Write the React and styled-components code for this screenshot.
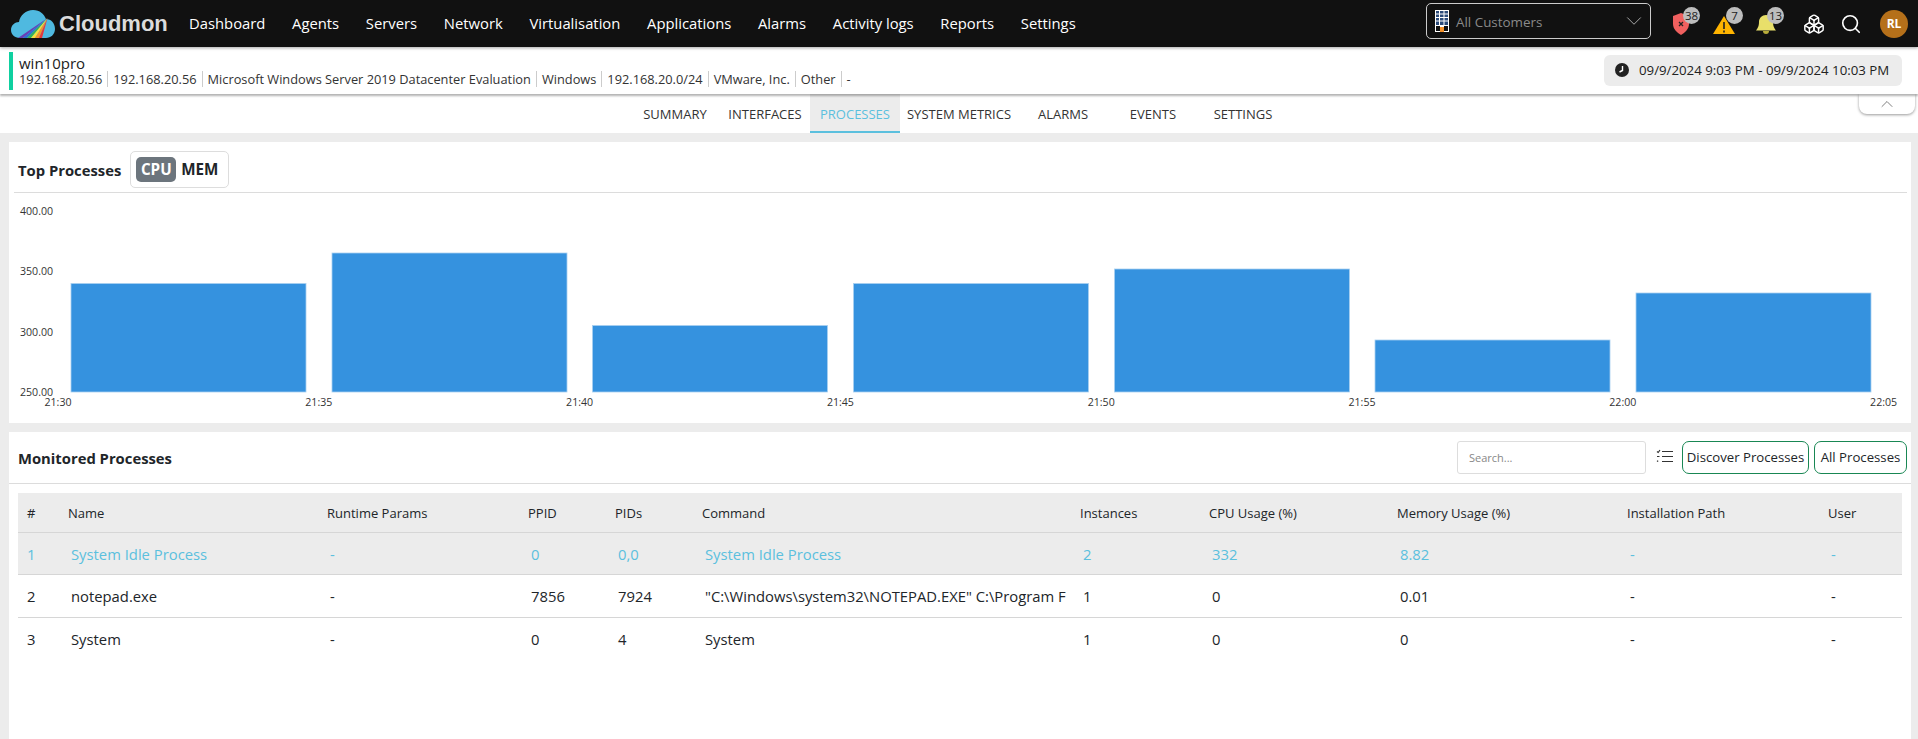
import React from 'react';
import styled, { createGlobalStyle } from 'styled-components';
import { Boxes, Search, ChevronDown, ChevronUp } from 'lucide-react';

const Global = createGlobalStyle`
  html, body { margin: 0; padding: 0; background: #ececec; }
  body { font-family: "Open Sans", "Noto Sans", sans-serif; color: #212529; overflow: hidden; }
  * { box-sizing: border-box; }
`;

const Page = styled.div`
  width: 1918px;
  height: 739px;
  display: flex;
  flex-direction: column;
  overflow: hidden;
`;

const TopBar = styled.header`
  height: 47px;
  flex: none;
  background: #111;
  display: flex;
  align-items: center;
  padding: 0 10px 0 11px;
  position: relative;
  z-index: 3;
  box-shadow: 0 1px 3px rgba(0,0,0,.35);
`;
const Logo = styled.div`
  display: flex;
  align-items: center;
  width: 178px;
  flex: none;
`;
const LogoText = styled.span`
  font-family: "Liberation Sans", Arial, sans-serif;
  font-weight: 700;
  font-size: 22px;
  color: #dcdcdc;
  margin-left: 4px;
`;
const Nav = styled.nav`
  display: flex;
  gap: 26.7px;
`;
const NavLink = styled.a`
  color: #fff;
  font-size: 14.8px;
  white-space: nowrap;
  margin-top: -2px;
`;
const RightSide = styled.div`
  margin-left: auto;
  display: flex;
  align-items: center;
`;
const CustomerSelect = styled.div`
  width: 225px;
  height: 36px;
  margin-top: -5px;
  border: 1px solid #ccc;
  border-radius: 5px;
  display: flex;
  align-items: center;
  padding: 0 3px 0 8px;
  color: #8a8a8a;
  font-size: 13.4px;
  gap: 7px;
`;
const SelectLabel = styled.span`
  flex: 1;
  padding-top: 2px;
`;
const Alerts = styled.div`
  display: flex;
  gap: 20px;
  margin-left: 20px;
`;
const AlertIcon = styled.div`
  position: relative;
  width: 22px;
  height: 22px;
`;
const Badge = styled.span`
  position: absolute;
  left: ${p => p.$left}px;
  top: -6px;
  min-width: 17px;
  height: 17px;
  border-radius: 9px;
  background: #bdbdbd;
  color: #222;
  font-size: 11.5px;
  line-height: 17px;
  text-align: center;
`;
const Tools = styled.div`
  display: flex;
  align-items: center;
  gap: 15px;
  margin-left: 26px;
  color: #fff;
`;
const Avatar = styled.div`
  width: 28px;
  height: 28px;
  margin-left: 18px;
  border-radius: 50%;
  background: #b5701a;
  color: #fff;
  font-size: 12px;
  font-weight: 700;
  display: flex;
  align-items: center;
  justify-content: center;
`;

const SubHeader = styled.section`
  height: 47px;
  flex: none;
  background: #fff;
  display: flex;
  align-items: center;
  padding: 0 16px 0 9px;
  position: relative;
  z-index: 2;
  box-shadow: 0 2px 2px rgba(0,0,0,.3);
`;
const StatusBar = styled.div`
  width: 4px;
  height: 38px;
  background: #0fd0a0;
  margin-right: 6px;
`;
const HostInfo = styled.div`
  flex: 1;
  padding-top: 2px;
`;
const HostName = styled.div`
  font-size: 15px;
  line-height: 15px;
  color: #222;
`;
const Facts = styled.div`
  display: flex;
  font-size: 12.8px;
  line-height: 16px;
  color: #333;
`;
const Fact = styled.span`
  padding: 0 5px;
  border-left: 1px solid #ccc;
  &:first-child { border-left: 0; padding-left: 0; }
`;
const DatePill = styled.div`
  width: 298px;
  height: 31px;
  background: #ececec;
  border-radius: 6px;
  display: flex;
  align-items: center;
  padding-left: 11px;
  gap: 10px;
  font-size: 13.25px;
  color: #222;
  margin-top: -1px;
`;

const TabBar = styled.div`
  height: 39px;
  flex: none;
  background: #fff;
  display: flex;
  justify-content: center;
  position: relative;
  z-index: 1;
`;
const Tab = styled.a`
  width: ${p => p.$w || 90}px;
  display: flex;
  align-items: center;
  justify-content: center;
  font-size: 13px;
  padding-top: 2px;
  color: ${p => (p.$active ? '#5bc0de' : '#333')};
  background: ${p => (p.$active ? '#ececec' : 'transparent')};
  border-bottom: 2px solid ${p => (p.$active ? '#5bc0de' : 'transparent')};
  white-space: nowrap;
`;
const Collapse = styled.div`
  position: absolute;
  right: 3px;
  top: 0;
  width: 56px;
  height: 20px;
  background: #fff;
  border-radius: 0 0 8px 8px;
  box-shadow: 0 1px 3px rgba(0,0,0,.4);
  display: flex;
  align-items: center;
  justify-content: center;
  color: #666;
`;

const Main = styled.main`
  flex: 1;
  display: flex;
  flex-direction: column;
  gap: 9px;
  padding: 9px 7px 0 9px;
  min-height: 0;
`;
const ChartCard = styled.section`
  height: 281px;
  flex: none;
  background: #fff;
`;
const ChartHead = styled.div`
  height: 51px;
  margin: 0 4px 0 5px;
  border-bottom: 1px solid #dcdcdc;
  display: flex;
  align-items: center;
  padding: 6px 0 0 4px;
`;
const CardTitle = styled.h2`
  margin: 0;
  font-size: 14.8px;
  font-weight: 700;
  color: #212529;
`;
const Toggle = styled.div`
  margin-left: 9px;
  margin-top: -2px;
  width: 99px;
  height: 37px;
  border: 1px solid #ddd;
  border-radius: 5px;
  display: flex;
  align-items: center;
  padding-left: 5px;
  gap: 5px;
  font-size: 15.2px;
  font-weight: 700;
`;
const ToggleOn = styled.span`
  width: 40px;
  height: 25px;
  background: #6c757d;
  color: #fff;
  border-radius: 5px;
  display: flex;
  align-items: center;
  justify-content: center;
`;
const ChartSvg = styled.svg`
  display: block;
  width: 1902px;
  height: 230px;
  font-family: "Open Sans", sans-serif;
  font-size: 10.6px;
  fill: #333;
`;

const TableCard = styled.section`
  flex: 1;
  background: #fff;
`;
const TableHead = styled.div`
  height: 52px;
  border-bottom: 1px solid #dcdcdc;
  display: flex;
  align-items: center;
  padding: 0 4px 0 9px;
  gap: 5px;
`;
const HeadSpacer = styled.div`
  flex: 1;
`;
const SearchInput = styled.input`
  width: 189px;
  height: 33px;
  border: 1px solid #ddd;
  border-radius: 3px;
  padding: 0 11px;
  font: 11px "Open Sans", sans-serif;
  margin-top: -1px;
  &::placeholder { color: #888; }
`;
const FilterBtn = styled.div`
  width: 36px;
  height: 33px;
  display: flex;
  align-items: center;
  justify-content: center;
  margin: -3px -5px 0 -5px;
`;
const OutlineBtn = styled.button`
  height: 33px;
  width: ${p => p.$w}px;
  border: 1px solid #198754;
  border-radius: 7px;
  background: #fff;
  color: #212529;
  font: 13.2px "Open Sans", sans-serif;
  padding: 0;
  white-space: nowrap;
  margin-top: -1px;
`;
const TableWrap = styled.div`
  padding: 9px 9px 0 9px;
`;
const Grid = styled.table`
  width: 1884px;
  table-layout: fixed;
  border-collapse: collapse;
`;
const Th = styled.th`
  text-align: left;
  font-size: 13px;
  font-weight: 500;
  color: #212529;
  height: 39px;
  padding: 1px 0 0 9px;
  background: #ececec;
  border-bottom: 1px solid #d6d6d6;
`;
const Tr = styled.tr`
  background: ${p => (p.$active ? '#ececec' : '#fff')};
  color: ${p => (p.$active ? '#5bc0de' : '#212529')};
`;
const Td = styled.td`
  font-size: 14.8px;
  height: 42.5px;
  padding: 1px 6px 0 ${p => (p.$first ? 9 : 12)}px;
  border-bottom: ${p => (p.$last ? '0' : '1px solid #d6d6d6')};
  white-space: nowrap;
  overflow: hidden;
`;

const Cloud = () => (
  <svg width="44" height="28" viewBox="0 0 44 28">
    <path fill="#4fb9e0" d="M9 28C3 28 0 24 0 20c0-5 4-8 8-8C9 5 15 0 22 0c7 0 11 4 13 9 5 0 9 4 9 10 0 5-4 9-9 9Z" />
    <polygon fill="#6a3fb5" points="36.5,8 7,28 12,28" />
    <polygon fill="#2f6fd0" points="36.5,8 12,28 16,28" />
    <polygon fill="#35b15a" points="36.5,8 16,28 20,28" />
    <polygon fill="#f4e23c" points="36.5,8 20,28 24,28" />
    <polygon fill="#f5932c" points="36.5,8 24,28 28,28" />
    <polygon fill="#e5383b" points="36.5,8 28,28 31,28" />
  </svg>
);
const Building = () => (
  <svg width="14" height="22" viewBox="0 0 14 22">
    <rect width="14" height="22" fill="#fff" />
    <rect x="1" y="1" width="12" height="14" fill="#2a4a7a" />
    <path stroke="#fff" strokeWidth="1" d="M1 4h12M1 7.500h12M1 11h12M4.500 1v14M9 1v14" />
    <rect x="1" y="16" width="4" height="5" fill="#111" />
    <rect x="9" y="16" width="4" height="5" fill="#111" />
    <rect x="5" y="17" width="4" height="5" fill="#f5932c" />
  </svg>
);
const Shield = () => (
  <svg width="22" height="22" viewBox="0 0 22 22">
    <path fill="#f0605f" d="M2 3 10 0l8 3v8c0 5-4 8.500-8 11-4-2.500-8-6-8-11Z" />
    <path stroke="#222" strokeWidth="1.300" d="M8 9l4 4M12 9l-4 4" />
  </svg>
);
const Warn = () => (
  <svg width="22" height="22" viewBox="0 0 22 22">
    <path fill="#ffb400" d="M11 3 22 21H0Z" />
    <path stroke="#222" strokeWidth="1.600" d="M11 9v7M11 17.500v2" />
  </svg>
);
const Bell = () => (
  <svg width="22" height="22" viewBox="0 0 22 22">
    <path fill="#e8df6a" d="M11 2c4 0 7 3 7 7 0 5 2 7 3 8.500H1C2 16 4 14 4 9c0-4 3-7 7-7Z" />
    <path fill="#b9ad3a" d="M8 18h6c0 2-1 3-3 3s-3-1-3-3Z" />
  </svg>
);
const Clock = () => (
  <svg width="14" height="14" viewBox="0 0 14 14">
    <circle cx="7" cy="7" r="7" fill="#222" />
    <path stroke="#fff" strokeWidth="1.400" fill="none" d="M7.500 3v4.500L4.500 9" />
  </svg>
);
const ListIcon = () => (
  <svg width="17" height="15" viewBox="0 0 17 15" fill="none" stroke="#333" strokeWidth="1.200">
    <path d="M6 2.500h11M6 7.500h11M6 12.500h11" />
    <path d="M1 2.500l1.200 1L4 1M1 7.500h2.500M1 12.500l1.200-.8" />
  </svg>
);

const navItems = ['Dashboard', 'Agents', 'Servers', 'Network', 'Virtualisation', 'Applications', 'Alarms', 'Activity logs', 'Reports', 'Settings'];
const facts = ['192.168.20.56', '192.168.20.56', 'Microsoft Windows Server 2019 Datacenter Evaluation', 'Windows', '192.168.20.0/24', 'VMware, Inc.', 'Other', '-'];
const tabs = [['SUMMARY'], ['INTERFACES'], ['PROCESSES', 90, true], ['SYSTEM METRICS', 118], ['ALARMS'], ['EVENTS'], ['SETTINGS']];
const bars = [[71, 283.5], [332, 253], [592.5, 325.5], [853.5, 283.5], [1114.5, 269], [1375, 340], [1636, 293]];
const yTicks = [['400.00', 211], ['350.00', 271], ['300.00', 332], ['250.00', 392]];
const xTicks = ['21:30', '21:35', '21:40', '21:45', '21:50', '21:55', '22:00', '22:05'];
const cols = [41, 259, 201, 87, 87, 378, 129, 188, 230, 201, 83];
const heads = ['#', 'Name', 'Runtime Params', 'PPID', 'PIDs', 'Command', 'Instances', 'CPU Usage (%)', 'Memory Usage (%)', 'Installation Path', 'User'];
const rows = [
  ['1', 'System Idle Process', '-', '0', '0,0', 'System Idle Process', '2', '332', '8.82', '-', '-'],
  ['2', 'notepad.exe', '-', '7856', '7924', '"C:\\Windows\\system32\\NOTEPAD.EXE" C:\\Program F', '1', '0', '0.01', '-', '-'],
  ['3', 'System', '-', '0', '4', 'System', '1', '0', '0', '-', '-'],
];

export default function App() {
  return (
    <Page>
      <Global />
      <TopBar>
        <Logo>
          <Cloud />
          <LogoText>Cloudmon</LogoText>
        </Logo>
        <Nav>
          {navItems.map(n => <NavLink key={n}>{n}</NavLink>)}
        </Nav>
        <RightSide>
          <CustomerSelect>
            <Building />
            <SelectLabel>All Customers</SelectLabel>
            <ChevronDown size={26} strokeWidth={0.9} color="#aaa" />
          </CustomerSelect>
          <Alerts>
            <AlertIcon><Shield /><Badge $left={12}>38</Badge></AlertIcon>
            <AlertIcon><Warn /><Badge $left={13}>7</Badge></AlertIcon>
            <AlertIcon><Bell /><Badge $left={12}>13</Badge></AlertIcon>
          </Alerts>
          <Tools>
            <Boxes size={22} strokeWidth={1.6} />
            <Search size={22} strokeWidth={1.8} />
          </Tools>
          <Avatar>RL</Avatar>
        </RightSide>
      </TopBar>

      <SubHeader>
        <StatusBar />
        <HostInfo>
          <HostName>win10pro</HostName>
          <Facts>
            {facts.map((f, i) => <Fact key={i}>{f}</Fact>)}
          </Facts>
        </HostInfo>
        <DatePill><Clock />09/9/2024 9:03 PM - 09/9/2024 10:03 PM</DatePill>
      </SubHeader>

      <TabBar>
        {tabs.map(([t, w, a]) => <Tab key={t} $w={w} $active={a}>{t}</Tab>)}
        <Collapse><ChevronUp size={20} strokeWidth={1} /></Collapse>
      </TabBar>

      <Main>
        <ChartCard>
          <ChartHead>
            <CardTitle>Top Processes</CardTitle>
            <Toggle><ToggleOn>CPU</ToggleOn>MEM</Toggle>
          </ChartHead>
          <ChartSvg viewBox="9 193 1902 230">
            {bars.map(([x, y]) => (
              <rect key={x} x={x} y={y} width={235} height={392 - y} fill="#3592df" stroke="#a9d0f0" strokeWidth="0.8" />
            ))}
            {yTicks.map(([t, y]) => <text key={t} x="20" y={y + 4}>{t}</text>)}
            {xTicks.map((t, i) => <text key={t} x={58 + i * 260.8} y="406" textAnchor="middle">{t}</text>)}
          </ChartSvg>
        </ChartCard>

        <TableCard>
          <TableHead>
            <CardTitle>Monitored Processes</CardTitle>
            <HeadSpacer />
            <SearchInput placeholder="Search..." />
            <FilterBtn><ListIcon /></FilterBtn>
            <OutlineBtn $w={127}>Discover Processes</OutlineBtn>
            <OutlineBtn $w={93}>All Processes</OutlineBtn>
          </TableHead>
          <TableWrap>
            <Grid>
              <colgroup>
                {cols.map((w, i) => <col key={i} style={{ width: w }} />)}
              </colgroup>
              <thead>
                <tr>{heads.map(h => <Th key={h}>{h}</Th>)}</tr>
              </thead>
              <tbody>
                {rows.map((r, ri) => (
                  <Tr key={ri} $active={ri === 0}>
                    {r.map((c, ci) => <Td key={ci} $first={ci === 0} $last={ri === 2}>{c}</Td>)}
                  </Tr>
                ))}
              </tbody>
            </Grid>
          </TableWrap>
        </TableCard>
      </Main>
    </Page>
  );
}
